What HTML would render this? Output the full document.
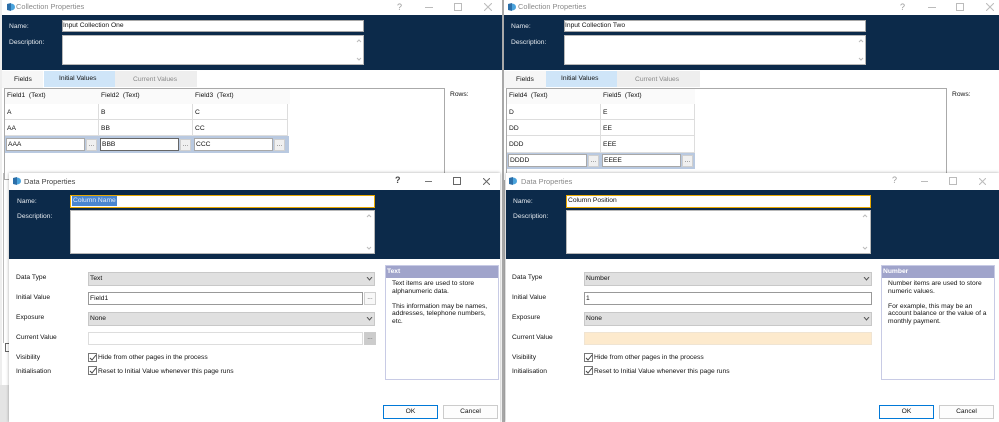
<!DOCTYPE html>
<html><head><meta charset="utf-8"><style>
html,body{margin:0;padding:0;width:999px;height:422px;overflow:hidden;background:#fff}
#r{position:absolute;left:0;top:0;width:999px;height:422px;overflow:hidden;filter:blur(.3px);font:6.7px/12px "Liberation Sans",sans-serif;color:#111}
#r div,#r svg,#r span{position:absolute;box-sizing:border-box;white-space:nowrap}
.n{background:#0c2a4a}
.w{color:#e6eaef}
.i{background:#fff;border:1px solid #a8a8a8;padding-left:1px;line-height:10px}
.ta{background:#fff;border:1px solid #b8b8b8}
.s{background:#e0e0e0;border:1px solid #c8c8c8;padding-left:1px;line-height:12px}
.b{background:#f0f0f0;border:1px solid #cfcfcf;text-align:center;line-height:10px;color:#555}
.c{width:9px;height:9px;background:#fff;border:1px solid #777}
.cell{border-right:1px solid #ddd;border-bottom:1px solid #ddd;padding-left:2px;line-height:17px}
</style></head><body><div id="r">

<!-- strip -->
<div style="left:502px;top:0;width:3px;height:422px;background:#a9a9a9"></div>
<div style="left:0;top:0;width:2px;height:422px;background:#eee"></div>

<!-- Collection 1 -->
<div style="left:2px;top:0;width:500px;height:180px;background:#fff">
<svg style="left:4px;top:2px" width="10" height="10" viewBox="0 0 10 10"><path d="M1 2L5 1V9L1 8Z" fill="#2b6ea8"/><path d="M5 1.5Q9 2 9 5T5 8.5Z" fill="#4aa3dc"/></svg>
<div style="left:14px;top:1px;font-size:7.4px;color:#8a8a8a">Collection Properties</div>
<div class="n" style="left:0;top:15px;width:500px;height:55px"></div>
<div class="w" style="left:7px;top:21px">Name:</div>
<div class="i" style="left:60px;top:20px;width:302px;height:12px;padding-left:0">Input Collection One</div>
<div class="w" style="left:7px;top:37px">Description:</div>
<div class="ta" style="left:60px;top:35px;width:302px;height:30px"></div>
<svg style="left:354px;top:39px" width="6" height="22"><path d="M1 3L3 1L5 3M1 19L3 21L5 19" stroke="#bbb" fill="none"/></svg>
<div style="left:0;top:71px;width:41px;height:17px;background:#f6f6f6;padding:2px 0 0 12px;line-height:14px">Fields</div>
<div style="left:42px;top:71px;width:72px;height:16px;background:#cfe5f8;padding-left:15px;line-height:15px">Initial Values</div>
<div style="left:113px;top:71px;width:82px;height:16px;background:#eee;padding-left:18px;line-height:18px;color:#888">Current Values</div>
<div style="left:2px;top:88px;width:441px;height:92px;border:1px solid #aaa;background:#fff"></div>
<div style="left:3px;top:89px;width:285px;height:15px;background:#fafafa"></div>
<div style="left:5px;top:90px">Field1&nbsp;&nbsp;(Text)</div>
<div style="left:99px;top:90px">Field2&nbsp;&nbsp;(Text)</div>
<div style="left:193px;top:90px">Field3&nbsp;&nbsp;(Text)</div>
<div class="cell" style="left:3px;top:104px;width:94px;height:16px">A</div>
<div class="cell" style="left:97px;top:104px;width:94px;height:16px">B</div>
<div class="cell" style="left:191px;top:104px;width:95px;height:16px">C</div>
<div class="cell" style="left:3px;top:120px;width:94px;height:16px">AA</div>
<div class="cell" style="left:97px;top:120px;width:94px;height:16px">BB</div>
<div class="cell" style="left:191px;top:120px;width:95px;height:16px">CC</div>
<div style="left:3px;top:136px;width:284px;height:17px;background:#b9c9e0"></div>
<div class="i" style="left:4px;top:138px;width:79px;height:13px;line-height:11px">AAA</div>
<div class="b" style="left:84px;top:139px;width:11px;height:12px">...</div>
<div class="i" style="left:98px;top:138px;width:79px;height:13px;line-height:11px;border-color:#666">BBB</div>
<div class="b" style="left:178px;top:139px;width:11px;height:12px">...</div>
<div class="i" style="left:192px;top:138px;width:79px;height:13px;line-height:11px">CCC</div>
<div class="b" style="left:272px;top:139px;width:11px;height:12px">...</div>
<div style="left:448px;top:89px">Rows:</div>
<div style="left:395px;top:1px;font-size:9px;color:#999">?</div>
<div style="left:423px;top:7px;width:8px;height:1px;background:#bbb"></div>
<div style="left:452px;top:3px;width:8px;height:8px;border:1px solid #bbb"></div>
<svg style="left:482px;top:3px" width="8" height="8"><path d="M0 0L8 8M8 0L0 8" stroke="#bbb"/></svg>
</div>

<!-- Collection 2 -->
<div style="left:504px;top:0;width:495px;height:180px;background:#fff">
<svg style="left:3px;top:2px" width="10" height="10" viewBox="0 0 10 10"><path d="M1 2L5 1V9L1 8Z" fill="#2b6ea8"/><path d="M5 1.5Q9 2 9 5T5 8.5Z" fill="#4aa3dc"/></svg>
<div style="left:14px;top:1px;font-size:7.4px;color:#8a8a8a">Collection Properties</div>
<div class="n" style="left:0;top:15px;width:495px;height:55px"></div>
<div class="w" style="left:7px;top:21px">Name:</div>
<div class="i" style="left:60px;top:20px;width:302px;height:12px;padding-left:0">Input Collection Two</div>
<div class="w" style="left:7px;top:37px">Description:</div>
<div class="ta" style="left:60px;top:35px;width:302px;height:30px"></div>
<svg style="left:354px;top:39px" width="6" height="22"><path d="M1 3L3 1L5 3M1 19L3 21L5 19" stroke="#bbb" fill="none"/></svg>
<div style="left:0;top:71px;width:42px;height:17px;background:#f6f6f6;padding:2px 0 0 12px;line-height:14px">Fields</div>
<div style="left:42px;top:71px;width:71px;height:16px;background:#cfe5f8;padding-left:15px;line-height:15px">Initial Values</div>
<div style="left:113px;top:71px;width:83px;height:16px;background:#eee;padding-left:18px;line-height:18px;color:#888">Current Values</div>
<div style="left:2px;top:88px;width:441px;height:92px;border:1px solid #aaa;background:#fff"></div>
<div style="left:3px;top:89px;width:188px;height:15px;background:#fafafa"></div>
<div style="left:5px;top:90px">Field4&nbsp;&nbsp;(Text)</div>
<div style="left:99px;top:90px">Field5&nbsp;&nbsp;(Text)</div>
<div class="cell" style="left:3px;top:104px;width:94px;height:16px">D</div>
<div class="cell" style="left:97px;top:104px;width:94px;height:16px">E</div>
<div class="cell" style="left:3px;top:120px;width:94px;height:16px">DD</div>
<div class="cell" style="left:97px;top:120px;width:94px;height:16px">EE</div>
<div class="cell" style="left:3px;top:136px;width:94px;height:17px">DDD</div>
<div class="cell" style="left:97px;top:136px;width:94px;height:17px">EEE</div>
<div style="left:3px;top:153px;width:188px;height:16px;background:#b9c9e0"></div>
<div class="i" style="left:4px;top:154px;width:79px;height:13px;line-height:11px">DDDD</div>
<div class="b" style="left:84px;top:155px;width:11px;height:12px">...</div>
<div class="i" style="left:98px;top:154px;width:79px;height:13px;line-height:11px">EEEE</div>
<div class="b" style="left:178px;top:155px;width:11px;height:12px">...</div>
<div style="left:448px;top:89px">Rows:</div>
<div style="left:396px;top:1px;font-size:9px;color:#999">?</div>
<div style="left:424px;top:7px;width:8px;height:1px;background:#bbb"></div>
<div style="left:452px;top:3px;width:8px;height:8px;border:1px solid #bbb"></div>
<svg style="left:482px;top:3px" width="8" height="8"><path d="M0 0L8 8M8 0L0 8" stroke="#bbb"/></svg>
</div>

<!-- behind dialog left -->
<div style="left:3px;top:173px;width:1px;height:170px;background:#bbb"></div>
<div style="left:5px;top:343px;width:5px;height:9px;background:#fff;border:1px solid #666"></div>
<div style="left:0;top:385px;width:9px;height:37px;background:#e4e4e4"></div>

<!-- Data dialog 1 -->
<div style="left:9px;top:173px;width:491px;height:249px;background:#fff;box-shadow:0 0 3px rgba(0,0,0,.35)">
<svg style="left:3px;top:3px" width="10" height="10" viewBox="0 0 10 10"><path d="M1 2L5 1V9L1 8Z" fill="#2b6ea8"/><path d="M5 1.5Q9 2 9 5T5 8.5Z" fill="#4aa3dc"/></svg>
<div style="left:15px;top:3px;font-size:7.4px;color:#444">Data Properties</div>
<div class="n" style="left:0;top:17px;width:491px;height:69px"></div>
<div class="w" style="left:8px;top:23px">Name:</div>
<div style="left:61px;top:22px;width:305px;height:13px;background:#fff;border:1.5px solid #e8a800;line-height:10px;padding-left:1px"><span style="position:static;background:#4a86d0;color:#dfe9f5;display:inline-block;height:10px;padding:0 1px">Column Name</span></div>
<div class="w" style="left:8px;top:38px">Description:</div>
<div class="ta" style="left:61px;top:37px;width:305px;height:44px"></div>
<svg style="left:357px;top:41px" width="6" height="36"><path d="M1 3L3 1L5 3M1 33L3 35L5 33" stroke="#bbb" fill="none"/></svg>
<div style="left:7px;top:99px">Data Type</div>
<div class="s" style="left:79px;top:99px;width:287px;height:14px">Text</div>
<svg style="left:357px;top:104px" width="7" height="4"><path d="M1 0L3.5 3L6 0" stroke="#555" fill="none"/></svg>
<div style="left:7px;top:119px">Initial Value</div>
<div class="i" style="left:79px;top:119px;width:275px;height:13px;line-height:11px;border-color:#999">Field1</div>
<div class="b" style="left:355px;top:119px;width:12px;height:13px;background:#f8f8f8">...</div>
<div style="left:7px;top:139px">Exposure</div>
<div class="s" style="left:79px;top:139px;width:287px;height:14px">None</div>
<svg style="left:357px;top:144px" width="7" height="4"><path d="M1 0L3.5 3L6 0" stroke="#555" fill="none"/></svg>
<div style="left:7px;top:159px">Current Value</div>
<div class="i" style="left:79px;top:159px;width:275px;height:13px;border-color:#ddd"></div>
<div class="b" style="left:355px;top:159px;width:12px;height:13px;background:#ccc;border-color:#ccc">...</div>
<div style="left:7px;top:179px">Visibility</div>
<div class="c" style="left:79px;top:180px"></div>
<svg style="left:80px;top:181px" width="8" height="8"><path d="M1 4L3 6L7 1" stroke="#444" fill="none"/></svg>
<div style="left:89px;top:179px">Hide from other pages in the process</div>
<div style="left:7px;top:193px">Initialisation</div>
<div class="c" style="left:79px;top:193px"></div>
<svg style="left:80px;top:194px" width="8" height="8"><path d="M1 4L3 6L7 1" stroke="#444" fill="none"/></svg>
<div style="left:89px;top:193px">Reset to Initial Value whenever this page runs</div>
<div style="left:376px;top:92px;width:114px;height:115px;border:1px solid #c8cbe5;background:#fff"></div>
<div style="left:377px;top:93px;width:112px;height:12px;background:#a0a4cb;color:#fff;font-weight:bold;padding-left:1px">Text</div>
<div style="left:383px;top:107px;line-height:7.5px;white-space:normal;width:105px">Text items are used to store<br>alphanumeric data.<br><br>This information may be names,<br>addresses, telephone numbers,<br>etc.</div>
<div style="left:374px;top:232px;width:55px;height:14px;border:1px solid #0078d7;background:#fdfdfd;text-align:center;line-height:12px">OK</div>
<div style="left:434px;top:232px;width:55px;height:14px;border:1px solid #ccc;background:#fdfdfd;text-align:center;line-height:12px">Cancel</div>
<div style="left:386px;top:1px;font-size:9px;font-weight:bold;color:#444">?</div>
<div style="left:416px;top:8px;width:7px;height:1px;background:#777"></div>
<div style="left:444px;top:4px;width:8px;height:8px;border:1px solid #666"></div>
<svg style="left:474px;top:5px" width="7" height="7"><path d="M0 0L7 7M7 0L0 7" stroke="#666"/></svg>
</div>

<!-- Data dialog 2 -->
<div style="left:506px;top:173px;width:493px;height:249px;background:#fff;box-shadow:0 0 3px rgba(0,0,0,.35)">
<svg style="left:2px;top:3px" width="10" height="10" viewBox="0 0 10 10"><path d="M1 2L5 1V9L1 8Z" fill="#2b6ea8"/><path d="M5 1.5Q9 2 9 5T5 8.5Z" fill="#4aa3dc"/></svg>
<div style="left:15px;top:3px;font-size:7.4px;color:#8a8a8a">Data Properties</div>
<div class="n" style="left:0;top:17px;width:493px;height:69px"></div>
<div class="w" style="left:7px;top:23px">Name:</div>
<div style="left:60px;top:22px;width:305px;height:13px;background:#fff;border:1.5px solid #e8a800;line-height:10px;padding-left:1px">Column Position</div>
<div class="w" style="left:7px;top:38px">Description:</div>
<div class="ta" style="left:60px;top:37px;width:305px;height:44px"></div>
<svg style="left:356px;top:41px" width="6" height="36"><path d="M1 3L3 1L5 3M1 33L3 35L5 33" stroke="#bbb" fill="none"/></svg>
<div style="left:6px;top:99px">Data Type</div>
<div class="s" style="left:78px;top:99px;width:288px;height:14px">Number</div>
<svg style="left:357px;top:104px" width="7" height="4"><path d="M1 0L3.5 3L6 0" stroke="#555" fill="none"/></svg>
<div style="left:6px;top:119px">Initial Value</div>
<div class="i" style="left:78px;top:119px;width:288px;height:13px;line-height:11px;border-color:#999">1</div>
<div style="left:6px;top:139px">Exposure</div>
<div class="s" style="left:78px;top:139px;width:288px;height:14px">None</div>
<svg style="left:357px;top:144px" width="7" height="4"><path d="M1 0L3.5 3L6 0" stroke="#555" fill="none"/></svg>
<div style="left:6px;top:159px">Current Value</div>
<div style="left:78px;top:159px;width:288px;height:13px;background:#fdeacd;border:1px solid #f0e4d2"></div>
<div style="left:6px;top:179px">Visibility</div>
<div class="c" style="left:78px;top:180px"></div>
<svg style="left:79px;top:181px" width="8" height="8"><path d="M1 4L3 6L7 1" stroke="#444" fill="none"/></svg>
<div style="left:88px;top:179px">Hide from other pages in the process</div>
<div style="left:6px;top:193px">Initialisation</div>
<div class="c" style="left:78px;top:193px"></div>
<svg style="left:79px;top:194px" width="8" height="8"><path d="M1 4L3 6L7 1" stroke="#444" fill="none"/></svg>
<div style="left:88px;top:193px">Reset to Initial Value whenever this page runs</div>
<div style="left:375px;top:92px;width:114px;height:115px;border:1px solid #c8cbe5;background:#fff"></div>
<div style="left:376px;top:93px;width:112px;height:12px;background:#a0a4cb;color:#fff;font-weight:bold;padding-left:1px">Number</div>
<div style="left:382px;top:107px;line-height:7.5px;white-space:normal;width:106px">Number items are used to store<br>numeric values.<br><br>For example, this may be an<br>account balance or the value of a<br>monthly payment.</div>
<div style="left:373px;top:232px;width:55px;height:14px;border:1px solid #0078d7;background:#fdfdfd;text-align:center;line-height:12px">OK</div>
<div style="left:433px;top:232px;width:55px;height:14px;border:1px solid #ccc;background:#fdfdfd;text-align:center;line-height:12px">Cancel</div>
<div style="left:386px;top:1px;font-size:9px;color:#999">?</div>
<div style="left:415px;top:8px;width:7px;height:1px;background:#bbb"></div>
<div style="left:443px;top:4px;width:8px;height:8px;border:1px solid #bbb"></div>
<svg style="left:473px;top:5px" width="7" height="7"><path d="M0 0L7 7M7 0L0 7" stroke="#bbb"/></svg>
</div>

</div></body></html>
